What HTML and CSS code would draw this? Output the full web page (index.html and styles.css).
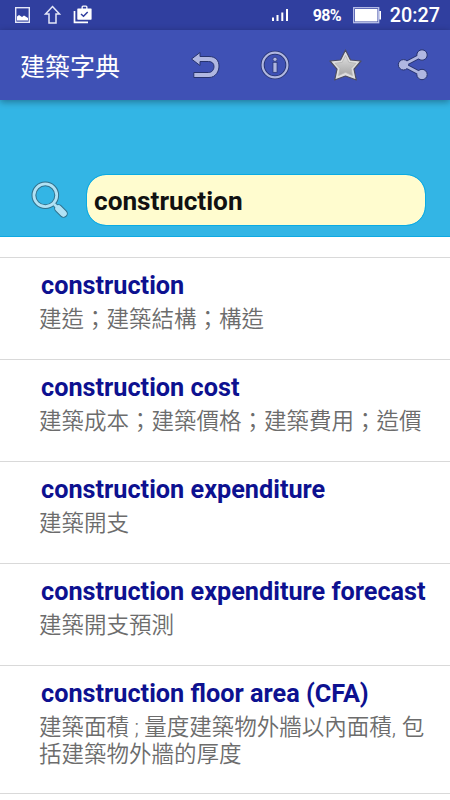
FILE: index.html
```html
<!DOCTYPE html>
<html lang="zh-Hant">
<head>
  <meta charset="UTF-8">
  <title>建築字典</title>
  <meta name="viewport" content="width=device-width,initial-scale=1">
  <link rel="stylesheet" href="styles.css">
</head>
<body>
  <div class="status-bar">
    <svg class="status-left" width="100" height="30" viewBox="0 0 100 30">
      <rect x="15.700" y="7.700" width="13.600" height="14.600" fill="none" stroke="#e4e7f8" stroke-width="1.400"/>
      <path d="M17 20.500v-4l2-1.500 3 2 2-1.500 4 2.500v2.500z" fill="#fff"/>
      <path d="M52.500 6.500l7 7.500h-3.500v9h-7v-9h-3.500z" fill="none" stroke="#e4e7f8" stroke-width="1.500"/>
      <path d="M74.500 11v11.300h13.500" fill="none" stroke="#fff" stroke-width="1.700"/>
      <path d="M78 8.500h3.500V7q0-1.500 1.500-1.500h3q1.500 0 1.500 1.500v1.500H91q.6 0 .6.600V19q0 .7-.6.700H78q-.7 0-.7-.7V9.100q0-.6.700-.6zM82.800 8.500h3.400V6.700h-3.400z" fill="#fff" fill-rule="evenodd"/>
      <path d="M81 14l2.500 2.300 4.200-4.400" fill="none" stroke="#303f9f" stroke-width="1.500"/>
    </svg>
    <div class="status-right">
      <svg class="signal" width="18" height="14" viewBox="0 0 18 14">
        <path d="M2 9.500v3.500M6.500 7v6M11.300 4.500v8.500M16 1v12" fill="none" stroke="#fff" stroke-width="2"/>
      </svg>
      <span class="percent">98%</span>
      <svg class="battery" width="29" height="17" viewBox="0 0 29 17">
        <rect x=".7" y=".7" width="25" height="15" fill="none" stroke="#b9c0e8" stroke-width="1.300"/>
        <rect x="2" y="2" width="22.500" height="12.500" fill="#fff"/>
        <path d="M26.300 4h1.700v8.500h-1.700z" fill="#fff"/>
      </svg>
      <span class="clock">20:27</span>
    </div>
  </div>

  <div class="toolbar">
    <h1>建築字典</h1>
    <div class="actions">
      <svg width="70" height="70" viewBox="0 0 70 70">
        <path d="M21.500 29L30 22.500V26.500H39C46 26.500 49 31 49 36S46 47.500 39 47.500H23.800V42.500H38.500C42 42.500 44 39.500 44 36.500S42 31.500 38.500 31.500H30V35.500z" fill="#b0b7e1" stroke="#27336f" stroke-width="1"/>
      </svg>
      <svg width="70" height="70" viewBox="0 0 70 70">
        <circle cx="35" cy="35" r="12.400" fill="none" stroke="#27336f" stroke-width="3.800"/>
        <circle cx="35" cy="35" r="12.400" fill="none" stroke="#b0b7e1" stroke-width="2.200"/>
        <circle cx="35" cy="29.300" r="2.100" fill="#b0b7e1" stroke="#27336f" stroke-width=".7"/>
        <rect x="33" y="32.300" width="4" height="10" fill="#b0b7e1" stroke="#27336f" stroke-width=".7"/>
      </svg>
      <svg width="70" height="70" viewBox="0 0 70 70">
        <defs>
          <linearGradient id="star-fill" x1="0" y1="0" x2="0" y2="1">
            <stop offset="0" stop-color="#dedede"/>
            <stop offset="1" stop-color="#a6a6a6"/>
          </linearGradient>
        </defs>
        <path d="M35.500 20L40.500 30L51 31L44 39.200L46.300 50L35.500 46L24.700 50L27 39.200L20 31L30.500 30z" fill="#dedede" stroke="#4c4d62" stroke-width="1.200" stroke-linejoin="round"/>
        <path d="M35.500 25.500L38.800 32.300L46 33.300L41.100 38.400L42.400 45.600L35.500 42.300L28.600 45.600L29.900 38.400L25 33.300L32.200 32.300z" fill="url(#star-fill)" stroke="#b4b4b4" stroke-width=".8"/>
      </svg>
      <svg width="70" height="70" viewBox="0 0 70 70">
        <g transform="translate(-4 0)">
          <path d="M46 25L27.500 34.800L46 44.500" fill="none" stroke="#27336f" stroke-width="4.500"/>
          <g fill="#b0b7e1" stroke="#27336f">
            <circle cx="46" cy="25" r="5.200"/>
            <circle cx="27.500" cy="34.800" r="5.200"/>
            <circle cx="46" cy="44.500" r="5.200"/>
          </g>
          <path d="M46 25L27.500 34.800L46 44.500" fill="none" stroke="#b0b7e1" stroke-width="2.700"/>
        </g>
      </svg>
    </div>
  </div>

  <div class="search">
    <svg class="search-icon" width="40" height="40" viewBox="0 0 40 40">
      <path d="M24.500 24.500l3.500 3.500" stroke="#32718c" stroke-width="4.500"/>
      <path d="M28.500 28.500l5 5" stroke="#32718c" stroke-width="8.500" stroke-linecap="round"/>
      <circle cx="15.300" cy="15.300" r="11.400" fill="none" stroke="#32718c" stroke-width="4.800"/>
      <circle cx="15.300" cy="15.300" r="11.400" fill="none" stroke="#b0e2f5" stroke-width="2.800"/>
      <path d="M24 24l4 4" stroke="#b0e2f5" stroke-width="2.600"/>
      <path d="M28.500 28.500l5 5" stroke="#b0e2f5" stroke-width="6.500" stroke-linecap="round"/>
    </svg>
    <input type="text" class="search-input" value="construction">
  </div>

  <ul class="results">
    <li class="entry">
      <h2>construction</h2>
      <p>建造；建築結構；構造</p>
    </li>
    <li class="entry">
      <h2>construction cost</h2>
      <p>建築成本；建築價格；建築費用；造價</p>
    </li>
    <li class="entry">
      <h2>construction expenditure</h2>
      <p>建築開支</p>
    </li>
    <li class="entry">
      <h2>construction expenditure forecast</h2>
      <p>建築開支預測</p>
    </li>
    <li class="entry">
      <h2>construction floor area (CFA)</h2>
      <p>建築面積 ; 量度建築物外牆以內面積, 包<br>括建築物外牆的厚度</p>
    </li>
  </ul>
</body>
</html>
```

FILE: styles.css
```css
* {
  box-sizing: border-box;
}
body {
  margin: 0;
  background: #fff;
  font-family: Roboto, "Noto Sans CJK TC", sans-serif;
}
svg {
  display: block;
  flex: none;
}
.status-bar {
  display: flex;
  justify-content: space-between;
  height: 30px;
  background: #303f9f;
  color: #fff;
}
.status-right {
  display: flex;
  align-items: center;
  padding-right: 10px;
}
.signal {
  margin-right: 24px;
}
.percent {
  width: 28px;
  margin-right: 12px;
  font-size: 16px;
  font-weight: 700;
  letter-spacing: -0.7px;
  white-space: nowrap;
}
.battery {
  margin-right: 8px;
}
.clock {
  font-size: 19.8px;
  font-weight: 500;
}
.toolbar {
  position: relative;
  display: flex;
  justify-content: space-between;
  align-items: center;
  height: 70px;
  padding-left: 20px;
  background: #3f51b5;
  box-shadow: 0 2px 7px rgba(0, 0, 0, 0.35);
}
.toolbar h1 {
  margin: 0;
  color: #fff;
  font-size: 25px;
  font-weight: 400;
}
.actions {
  display: flex;
}
.search {
  display: flex;
  align-items: flex-end;
  height: 137px;
  padding: 0 25px 11px 30px;
  background: #33b5e5;
  border-bottom: 1px solid #0fa9e2;
}
.search-icon {
  margin: 0 17px 5px 0;
}
.search-input {
  flex: 1;
  min-width: 0;
  height: 50px;
  padding: 2px 7px 0;
  border: 0;
  border-radius: 19px;
  outline: 1px solid #0aabe3;
  background: #fffccf;
  color: #111;
  font-family: Roboto, sans-serif;
  font-size: 26.2px;
  font-weight: 700;
}
.results {
  margin: 20px 0 0;
  padding: 0;
  list-style: none;
}
.entry {
  min-height: 102px;
  padding: 13px 10px 25px 39px;
  border-top: 1px solid #d9d9d9;
}
.entry:last-child {
  border-bottom: 1px solid #d9d9d9;
}
.entry h2 {
  margin: 0 0 5px 2px;
  color: #0d1190;
  font-size: 25.25px;
  font-weight: 700;
  line-height: 30px;
  white-space: nowrap;
}
.entry p {
  margin: 0;
  color: #6c6c6c;
  font-size: 22.5px;
  font-weight: 350;
  line-height: 27px;
  white-space: nowrap;
}
```
